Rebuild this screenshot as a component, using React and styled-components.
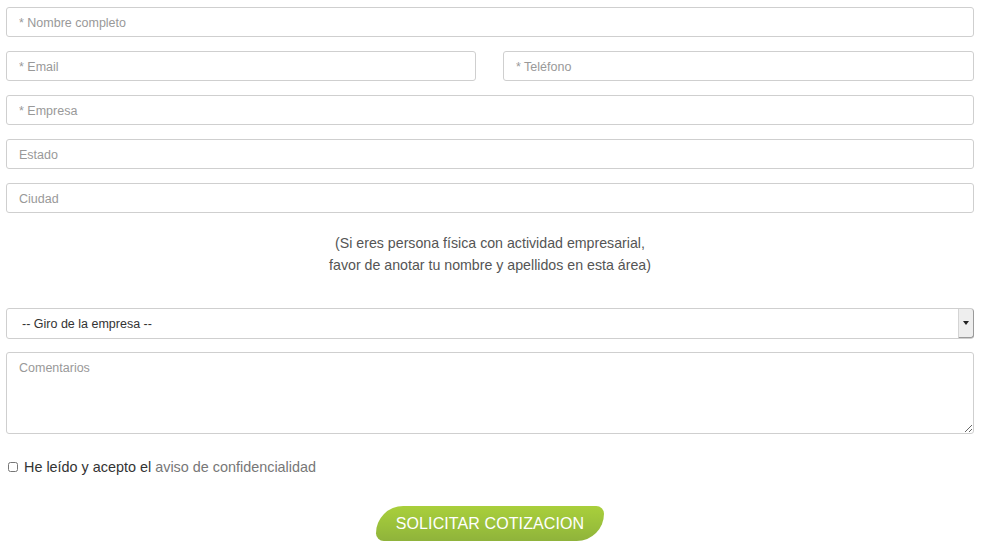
import React from "react";
import styled, { createGlobalStyle } from "styled-components";

const Global = createGlobalStyle`
  html, body { margin: 0; padding: 0; background: #fff; }
  body { font-family: "Liberation Sans", Arial, Helvetica, sans-serif; }
  * { box-sizing: border-box; }
`;

const Form = styled.form`
  width: 983px;
  padding: 7px 9px 0 6px;
  display: flex;
  flex-direction: column;
`;

const Row = styled.div`
  display: grid;
  grid-template-columns: ${(p) => (p.$split ? "470px 471px" : "1fr")};
  column-gap: 27px;
  margin-bottom: 14px;
`;

const Field = styled.input`
  display: block;
  width: 100%;
  height: 30px;
  padding: 1px 12px 0;
  border: 1px solid #cfcfcf;
  border-radius: 3px;
  background: #fff;
  font-family: inherit;
  font-size: 12.5px;
  color: #333;
  outline: none;
  &::placeholder { color: #999; }
`;

const Note = styled.p`
  margin: 5px 0 32px;
  text-align: center;
  font-size: 14.2px;
  line-height: 22px;
  color: #555;
`;

const SelectWrap = styled.div`
  position: relative;
  height: 31px;
  margin-bottom: 13px;
`;

const Select = styled.select`
  appearance: none;
  -webkit-appearance: none;
  width: 100%;
  height: 100%;
  padding: 0 0 0 15px;
  border: 1px solid #cfcfcf;
  border-radius: 3px;
  background: #fff;
  font-family: inherit;
  font-size: 12.5px;
  color: #333;
  outline: none;
`;

const ArrowBox = styled.span`
  position: absolute;
  top: 1px;
  right: 0;
  width: 16px;
  height: 29px;
  background: #eeeeee;
  border-left: 1px solid #d4d4d4;
  border-right: 1px solid #9a9a9a;
  border-bottom: 1px solid #9a9a9a;
  border-radius: 0 3px 3px 0;
  display: flex;
  align-items: center;
  justify-content: center;
  pointer-events: none;
  &::after {
    content: "";
    border-left: 3px solid transparent;
    border-right: 3px solid transparent;
    border-top: 4px solid #222;
  }
`;

const Area = styled.textarea`
  display: block;
  width: 100%;
  height: 82px;
  padding: 8px 12px;
  border: 1px solid #cfcfcf;
  border-radius: 3px;
  font-family: inherit;
  font-size: 12.5px;
  color: #333;
  outline: none;
  margin: 0 0 23px;
  &::placeholder { color: #999; }
`;

const Consent = styled.label`
  display: flex;
  align-items: center;
  gap: 6px;
  padding-left: 2px;
  height: 20px;
  font-size: 14.4px;
  color: #333;
`;

const Box = styled.input`
  margin: 0;
  width: 10px;
  height: 10px;
`;

const Link = styled.a`
  color: #777;
  text-decoration: none;
`;

const Actions = styled.div`
  display: flex;
  justify-content: center;
  padding: 29px 0 0;
`;

const Submit = styled.button`
  width: 228px;
  height: 35px;
  border: none;
  border-radius: 28px 8px 28px 8px;
  background: linear-gradient(to bottom, #a9cf3b 0%, #9bc13b 55%, #8fb33b 100%);
  color: #fff;
  font-family: inherit;
  font-size: 16px;
  letter-spacing: 0.1px;
  cursor: pointer;
`;

export default function App() {
  return (
    <>
      <Global />
      <Form onSubmit={(e) => e.preventDefault()}>
        <Row>
          <Field placeholder="* Nombre completo" />
        </Row>
        <Row $split>
          <Field placeholder="* Email" />
          <Field placeholder="* Teléfono" />
        </Row>
        <Row>
          <Field placeholder="* Empresa" />
        </Row>
        <Row>
          <Field placeholder="Estado" />
        </Row>
        <Row>
          <Field placeholder="Ciudad" />
        </Row>
        <Note>
          (Si eres persona física con actividad empresarial,
          <br />
          favor de anotar tu nombre y apellidos en esta área)
        </Note>
        <SelectWrap>
          <Select defaultValue="">
            <option value="">-- Giro de la empresa --</option>
          </Select>
          <ArrowBox />
        </SelectWrap>
        <Area placeholder="Comentarios" />
        <Consent>
          <Box type="checkbox" />
          <span>
            He leído y acepto el <Link href="#">aviso de confidencialidad</Link>
          </span>
        </Consent>
        <Actions>
          <Submit type="submit">SOLICITAR COTIZACION</Submit>
        </Actions>
      </Form>
    </>
  );
}
